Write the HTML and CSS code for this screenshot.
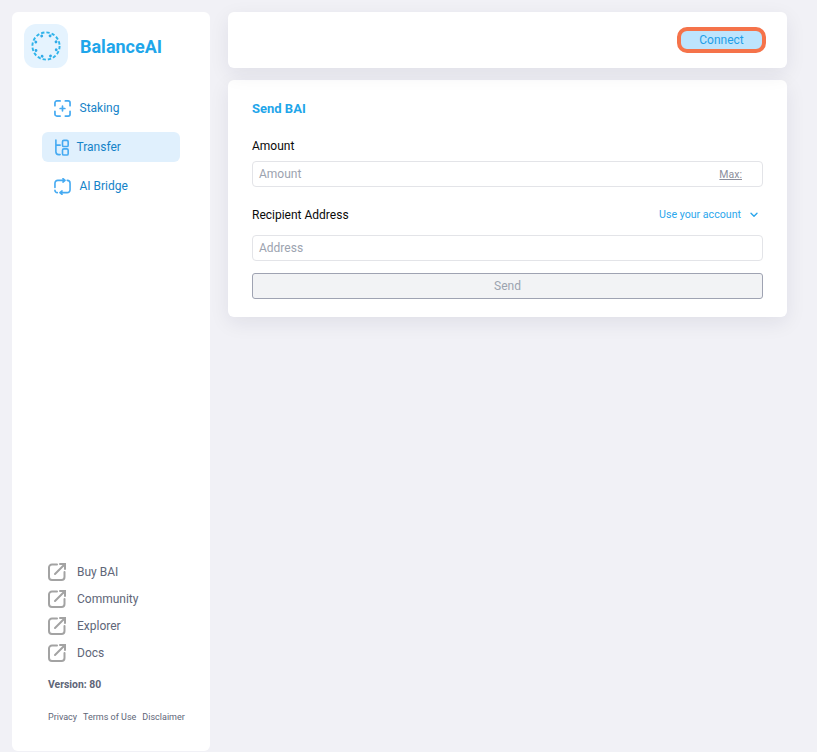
FILE: index.html
```html
<!DOCTYPE html>
<html lang="en">
<head>
<meta charset="utf-8">
<title>BalanceAI</title>
<link rel="stylesheet" href="styles.css">
</head>
<body>
<div class="app">
  <aside class="sidebar">
    <div class="brand">
      <div class="logo">
        <svg width="32" height="32" viewBox="0 0 32 32" fill="none">
          <circle cx="16" cy="16" r="13.600" stroke="#2fb4ea" stroke-width="1.900" stroke-dasharray="3.300 2.040"/>
          <circle cx="16" cy="16" r="10.900" stroke="#2fa9e8" stroke-width="2.800" stroke-dasharray="0.100 8.460" stroke-linecap="round" transform="rotate(20 16 16)"/>
        </svg>
      </div>
      <span class="brand-name">BalanceAI</span>
    </div>
    <nav class="nav">
      <a class="nav-item">
        <svg class="nav-icon" viewBox="0 0 18 18" fill="none"><path d="M1 6V3a2 2 0 0 1 2-2h3.500M12 1h3a2 2 0 0 1 2 2v3M17 12v3a2 2 0 0 1-2 2h-3M6.500 17H3a2 2 0 0 1-2-2v-3M9 6.500v5M6.500 9h5" stroke="#45aaf2" stroke-width="1.800" stroke-linecap="round"/></svg>
        <span>Staking</span>
      </a>
      <a class="nav-item active">
        <svg class="nav-icon" viewBox="0 0 18 18" fill="none"><path d="M2 1v12.500a3 3 0 0 0 3 3h1.500M2 6.500h4.500" stroke="#45aaf2" stroke-width="1.700" stroke-linecap="round"/><rect x="9" y="1.500" width="6" height="6.500" rx="1.500" stroke="#45aaf2" stroke-width="1.700"/><rect x="9" y="10.500" width="6" height="6.500" rx="1.500" stroke="#45aaf2" stroke-width="1.700"/></svg>
        <span>Transfer</span>
      </a>
      <a class="nav-item">
        <svg class="nav-icon" viewBox="0 0 18 18" fill="none"><path d="M1 10V5.500a3 3 0 0 1 3-3h7.500M9.500 .7 11.700 2.500 9.500 4.300M14 2.500a3 3 0 0 1 3 3v7a3 3 0 0 1-3 3H6.500M8.500 13.700 6.300 15.500 8.500 17.300M3.500 15.500A2.500 2.500 0 0 1 1 13" stroke="#45aaf2" stroke-width="1.700" stroke-linecap="round" stroke-linejoin="round"/></svg>
        <span>AI Bridge</span>
      </a>
    </nav>
    <div class="side-foot">
      <ul class="links">
        <li class="link-item"><svg class="ext-icon" viewBox="0 0 18 18" fill="none"><path d="M9 1.500H4a3 3 0 0 0-3 3v9.500a3 3 0 0 0 3 3h9.500a3 3 0 0 0 3-3V9M12 1h5v5M16.500 1.500 7 11" stroke="#a3a3a3" stroke-width="2" stroke-linecap="round"/></svg><span>Buy BAI</span></li>
        <li class="link-item"><svg class="ext-icon" viewBox="0 0 18 18" fill="none"><path d="M9 1.500H4a3 3 0 0 0-3 3v9.500a3 3 0 0 0 3 3h9.500a3 3 0 0 0 3-3V9M12 1h5v5M16.500 1.500 7 11" stroke="#a3a3a3" stroke-width="2" stroke-linecap="round"/></svg><span>Community</span></li>
        <li class="link-item"><svg class="ext-icon" viewBox="0 0 18 18" fill="none"><path d="M9 1.500H4a3 3 0 0 0-3 3v9.500a3 3 0 0 0 3 3h9.500a3 3 0 0 0 3-3V9M12 1h5v5M16.500 1.500 7 11" stroke="#a3a3a3" stroke-width="2" stroke-linecap="round"/></svg><span>Explorer</span></li>
        <li class="link-item"><svg class="ext-icon" viewBox="0 0 18 18" fill="none"><path d="M9 1.500H4a3 3 0 0 0-3 3v9.500a3 3 0 0 0 3 3h9.500a3 3 0 0 0 3-3V9M12 1h5v5M16.500 1.500 7 11" stroke="#a3a3a3" stroke-width="2" stroke-linecap="round"/></svg><span>Docs</span></li>
      </ul>
      <div class="version">Version: 80</div>
      <div class="legal"><span>Privacy</span><span>Terms of Use</span><span>Disclaimer</span></div>
    </div>
  </aside>
  <main class="main">
    <header class="topbar"><button class="connect">Connect</button></header>
    <section class="card">
      <h2 class="card-title">Send BAI</h2>
      <div class="label-row amount-label"><label>Amount</label></div>
      <div class="field"><span class="placeholder">Amount</span><span class="max">Max:</span></div>
      <div class="label-row recipient-label"><label>Recipient Address</label>
        <span class="account">Use your account
          <svg class="chev" viewBox="0 0 8 6" fill="none"><path d="M1 1.200 4 4.200 7 1.200" stroke="#2ba6ec" stroke-width="1.400" stroke-linecap="round" stroke-linejoin="round"/></svg>
        </span>
      </div>
      <div class="field"><span class="placeholder">Address</span></div>
      <button class="send">Send</button>
    </section>
  </main>
</div>
</body>
</html>
```

FILE: styles.css
```css
* { box-sizing: border-box; }
html, body { margin: 0; height: 100%; }
body {
  background: #f1f1f6;
  font-family: "Roboto", "Inter", "Liberation Sans", sans-serif;
  overflow: hidden;
}
.app {
  display: flex;
  gap: 18px;
  height: 752px;
  padding: 12px 30px 1px 12px;
}
.sidebar {
  width: 198px;
  flex: none;
  background: #fff;
  border-radius: 6px;
  display: flex;
  flex-direction: column;
  padding: 12px 0 0 12px;
}
.brand { display: flex; align-items: center; gap: 12px; }
.logo {
  width: 44px;
  height: 44px;
  border-radius: 12px;
  background: #e5f3fe;
  display: flex;
  align-items: center;
  justify-content: center;
}
.brand-name { font-size: 18px; font-weight: 700; color: #1fa6ea; }
.nav { display: flex; flex-direction: column; gap: 9px; margin-top: 25px; margin-left: 18px; width: 138px; }
.nav-item {
  display: flex;
  align-items: center;
  gap: 8.500px;
  height: 30px;
  padding-left: 12px;
  border-radius: 6px;
  font-size: 12px;
  font-weight: 400;
  color: #1583c8;
}
.nav-item.active { background: #e0f0fd; gap: 5.500px; }
.nav-icon { width: 17px; height: 17px; flex: none; }
.side-foot { margin-top: auto; padding: 0 0 28px 24px; }
.links { list-style: none; margin: 0; padding: 0; display: flex; flex-direction: column; gap: 9px; }
.link-item { display: flex; align-items: center; gap: 11px; height: 18px; font-size: 12px; color: #606678; }
.ext-icon { width: 18px; height: 18px; flex: none; }
.version { margin-top: 16px; font-size: 10.400px; font-weight: 700; color: #606678; line-height: 14px; }
.legal { margin-top: 19px; display: flex; gap: 6px; font-size: 9px; color: #606678; line-height: 12px; white-space: nowrap; }
.main { flex: 1; display: flex; flex-direction: column; gap: 12px; min-width: 0; }
.topbar {
  position: relative;
  z-index: 1;
  height: 56px;
  background: #fff;
  border-radius: 6px;
  box-shadow: 0 6px 20px rgba(30, 30, 60, .08);
  display: flex;
  align-items: center;
  justify-content: flex-end;
  padding-right: 21px;
}
.connect {
  width: 89px;
  height: 26px;
  border: 4px solid #f5734a;
  border-radius: 10px;
  background: #bde4fd;
  color: #1f9fe8;
  font: 400 12px "Roboto", sans-serif;
  padding: 0;
}
.card {
  height: 237px;
  background: #fff;
  border-radius: 6px;
  box-shadow: 0 6px 20px rgba(30, 30, 60, .08);
  padding: 21px 24px 0;
}
.card-title { margin: 0; font-size: 13px; line-height: 16px; font-weight: 700; color: #1fa6ea; }
.label-row { display: flex; justify-content: space-between; align-items: center; font-size: 12px; color: #0a0a0a; line-height: 16px; }
.amount-label { margin-top: 21px; }
.recipient-label { margin-top: 20px; }
.field {
  height: 26px;
  margin-top: 7px;
  border: 1px solid #e3e4e8;
  border-radius: 4px;
  display: flex;
  align-items: center;
  justify-content: space-between;
  padding: 0 20px 0 6px;
  font-size: 12px;
}
.recipient-label + .field { margin-top: 12px; }
.placeholder { color: #9ca3af; }
.max { font-size: 10.500px; color: #8b8e9c; text-decoration: underline; }
.account { display: flex; align-items: center; gap: 9px; font-size: 10.640px; color: #2ba6ec; padding-right: 5px; }
.chev { width: 8px; height: 6px; }
.send {
  display: block;
  width: 100%;
  height: 26px;
  margin-top: 12px;
  background: #f2f3f5;
  border: 1px solid #9fa3b2;
  border-radius: 3px;
  color: #9ca3af;
  font: 400 12px "Roboto", sans-serif;
}
```
